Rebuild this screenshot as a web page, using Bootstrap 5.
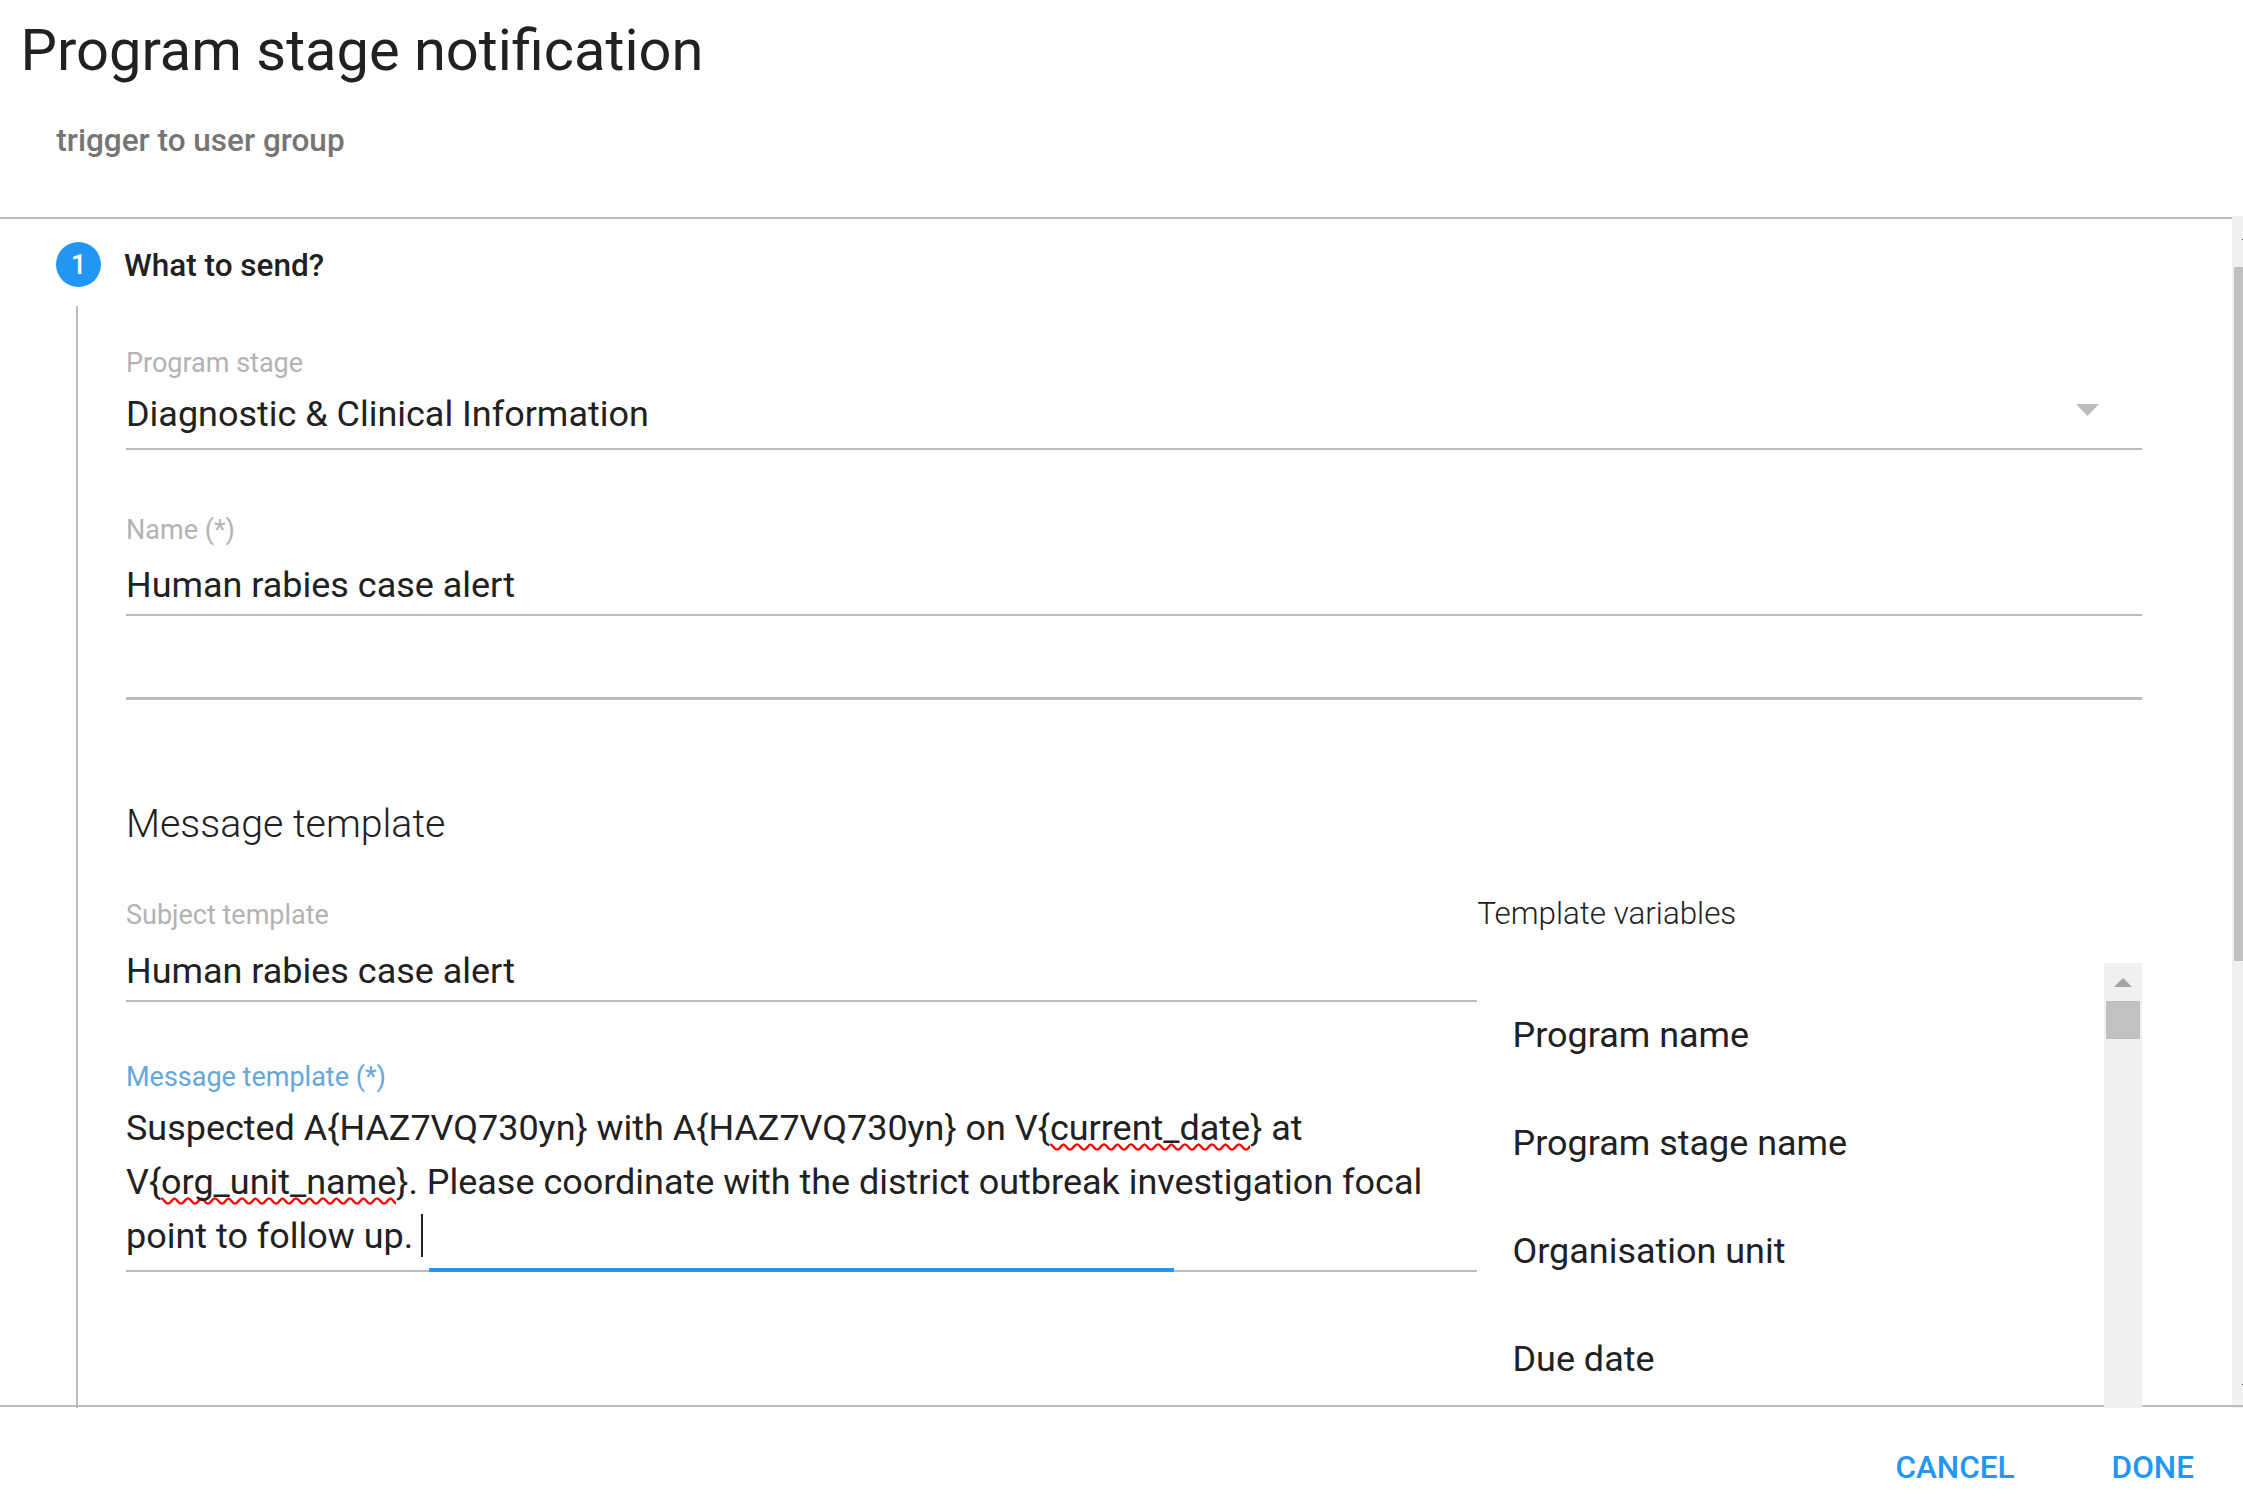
<!DOCTYPE html>
<html lang="en">
<head>
<meta charset="utf-8">
<title>Program stage notification</title>
<link href="https://cdn.jsdelivr.net/npm/bootstrap@5.3.0/dist/css/bootstrap.min.css" rel="stylesheet">
<style>
  body { font-family: Roboto, sans-serif; color: #212121; background: #fefefe; height: 1512px; overflow: hidden; }
  .dlg-head { height: 219px; border-bottom: 2px solid #bcbcbc; padding-top: 14px; }
  .dlg-title { font-size: 57.8px; line-height: 72px; font-weight: 400; margin: 0 0 28px; padding-left: 20.5px; }
  .dlg-sub { font-size: 31.5px; line-height: 54px; font-weight: 500; color: #757575; padding-left: 56.3px; }
  .dlg-body { height: 1189px; margin-top: 0; }
  .step-head { padding: 23px 0 0 56.3px; }
  .step-num { width: 45px; height: 45px; background: #2196f3; color: #fff; font-size: 27px; font-weight: 500; line-height: 47px; }
  .step-label { font-size: 31.5px; line-height: 45px; padding-top: 1px; font-weight: 500; margin-left: 22.7px; }
  .step-body { margin: 18px 90px 0 76px; border-left: 2px solid #bcbcbc; padding: 43px 0 0 48px; }
  .fld-label { font-size: 27px; line-height: 27px; color: #b3b3b3; padding-top: 1px; }
  .fld-value { font-size: 35.965px; line-height: 54px; }
  .fld { border-bottom: 2px solid #bcbcbc; }
  .fld-stage { height: 101px; }
  .fld-name { height: 100px; margin-top: 66px; }
  .fld-blank { height: 84px; border-bottom-width: 3px; }
  .fld-subject { height: 101px; margin-top: 50px; }
  .fld-msg { height: 209px; margin-top: 61px; }
  .fld-msg .fld-label { color: #64a8db; }
  .tpl-title { font-size: 39.3px; line-height: 54px; font-weight: 300; margin: 97px 0 0; }
  .tpl-left { width: 1351px; }
  .focus-bar { left: 303px; bottom: -2px; width: 745px; height: 4px; background: #2196f3; }
  .typo { padding-bottom: 2px; background: url("data:image/svg+xml,%3Csvg xmlns='http://www.w3.org/2000/svg' width='13.5' height='8' viewBox='0 0 13.5 8'%3E%3Cpath d='M-6.75 6.7C-4 6.7-2.75 1.3 0 1.3S4 6.7 6.75 6.7 10.75 1.3 13.5 1.3 17.5 6.7 20.25 6.7' fill='none' stroke='%23f00' stroke-width='2.3'/%3E%3C/svg%3E") left bottom / 13.5px 8px repeat-x; }
  .caret-bar { display: inline-block; width: 2px; height: 43px; background: #212121; vertical-align: -9px; margin: 0 -2px 0 -1px; }
  .vars-title { font-size: 31.35px; line-height: 54px; font-weight: 300; margin: 36px 0 22px 0.3px; }
  .vars { height: 445px; }
  .vars-list { padding: 18px 0 0 35.5px; font-size: 35.95px; line-height: 108px; }
  .vars-bar { width: 38px; background: #f0f0f0; z-index: 2; padding-top: 15px; }
  .vars-thumb { width: 34px; height: 38px; background: #c1c1c1; margin: 14px auto 0; }
  .page-bar { width: 11px; background: #f0f0f0; margin-top: -3px; padding: 23px 0 0 2px; }
  .page-thumb { height: 694px; background: #c1c1c1; margin-top: 27px; }
  .tick { width: 1px; height: 1px; background: #333; margin-left: auto; }
  .dlg-foot { height: 107px; margin-top: -3px; border-top: 2px solid #bcbcbc; z-index: 1; padding: 34px 49px 0 0; gap: 97px; }
  .act { --bs-btn-color: #2196f3; --bs-btn-hover-color: #2196f3; --bs-btn-padding-x: 0; --bs-btn-padding-y: 0; --bs-btn-border-width: 0; --bs-btn-font-size: 31.5px; --bs-btn-font-weight: 500; --bs-btn-line-height: 54px; height: 54px; font-family: inherit; }
  .stage-row { padding-top: 10px; }
  .stage-caret { margin: 17px 43px 0 0; }
  .value-gap { padding-top: 14px; }
  .value-gap-lg { padding-top: 15px; }
  .value-gap-sm { padding-top: 10px; }
  .tick-end { margin-top: 423px; }
</style>
</head>
<body>
<header class="dlg-head">
  <h1 class="dlg-title">Program stage notification</h1>
  <div class="dlg-sub">trigger to user group</div>
</header>
<main class="dlg-body d-flex">
  <section class="flex-grow-1 overflow-hidden d-flex flex-column">
    <div class="step-head d-flex align-items-start">
      <span class="step-num rounded-circle text-center">1</span>
      <span class="step-label">What to send?</span>
    </div>
    <div class="step-body flex-grow-1">
      <div class="fld fld-stage">
        <div class="fld-label">Program stage</div>
        <div class="stage-row d-flex justify-content-between">
          <span class="fld-value">Diagnostic &amp; Clinical Information</span>
          <svg class="stage-caret" width="23" height="12" viewBox="0 0 23 12"><path d="M0 0h23L11.5 12z" fill="#bcbcbc"/></svg>
        </div>
      </div>
      <div class="fld fld-name">
        <div class="fld-label">Name (*)</div>
        <div class="fld-value value-gap">Human rabies case alert</div>
      </div>
      <div class="fld fld-blank"></div>
      <h3 class="tpl-title">Message template</h3>
      <div class="d-flex">
        <div class="tpl-left">
          <div class="fld fld-subject">
            <div class="fld-label">Subject template</div>
            <div class="fld-value value-gap-lg">Human rabies case alert</div>
          </div>
          <div class="fld fld-msg position-relative">
            <div class="fld-label">Message template (*)</div>
            <div class="fld-value value-gap-sm text-nowrap">Suspected A{HAZ7VQ730yn} with A{HAZ7VQ730yn} on V{<span class="typo">current_date</span>} at<br>V{<span class="typo">org_unit_name</span>}. Please coordinate with the district outbreak investigation focal<br>point to follow up. <span class="caret-bar"></span></div>
            <div class="focus-bar position-absolute"></div>
          </div>
        </div>
        <div class="flex-grow-1">
          <h4 class="vars-title">Template variables</h4>
          <div class="vars d-flex justify-content-between">
            <ul class="vars-list list-unstyled mb-0">
              <li>Program name</li>
              <li>Program stage name</li>
              <li>Organisation unit</li>
              <li>Due date</li>
            </ul>
            <div class="vars-bar position-relative">
              <svg class="d-block mx-auto" width="18" height="9" viewBox="0 0 18 9"><path d="M9 0l9 9H0z" fill="#a3a3a3"/></svg>
              <div class="vars-thumb"></div>
            </div>
          </div>
        </div>
      </div>
    </div>
  </section>
  <div class="page-bar d-flex flex-column">
    <div class="tick"></div>
    <div class="page-thumb"></div>
    <div class="tick tick-end"></div>
  </div>
</main>
<footer class="dlg-foot position-relative d-flex justify-content-end">
  <button class="btn act" type="button">CANCEL</button>
  <button class="btn act" type="button">DONE</button>
</footer>
<script src="https://cdn.jsdelivr.net/npm/bootstrap@5.3.0/dist/js/bootstrap.bundle.min.js"></script>
</body>
</html>
